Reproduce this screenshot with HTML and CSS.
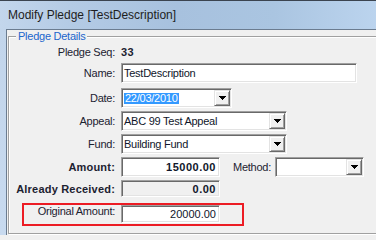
FILE: index.html
```html
<!DOCTYPE html>
<html>
<head>
<meta charset="utf-8">
<title>Modify Pledge</title>
<link rel="stylesheet" href="styles.css">
</head>
<body>
<div class="window">
  <div class="titlebar"><span class="title">Modify Pledge [TestDescription]</span></div>
  <div class="frame">
    <div class="client">
      <fieldset class="group">
        <legend>Pledge Details</legend>
        <div class="row r-seq">
          <span class="lbl">Pledge Seq:</span>
          <span class="seqval">33</span>
        </div>
        <div class="row r-name">
          <span class="lbl">Name:</span>
          <div class="tb w-name">TestDescription</div>
        </div>
        <div class="row r-date">
          <span class="lbl">Date:</span>
          <div class="cb w-date">
            <span class="cb-text"><span class="sel">22/03/2010</span></span>
            <span class="btn"><svg width="7" height="4" viewBox="0 0 7 4"><path d="M0 0h7v1H0zM1 1h5v1H1zM2 2h3v1H2zM3 3h1v1H3z" fill="#000"/></svg></span>
          </div>
        </div>
        <div class="row r-appeal">
          <span class="lbl">Appeal:</span>
          <div class="cb w-wide">
            <span class="cb-text">ABC 99 Test Appeal</span>
            <span class="btn"><svg width="7" height="4" viewBox="0 0 7 4"><path d="M0 0h7v1H0zM1 1h5v1H1zM2 2h3v1H2zM3 3h1v1H3z" fill="#000"/></svg></span>
          </div>
        </div>
        <div class="row r-fund">
          <span class="lbl">Fund:</span>
          <div class="cb w-wide">
            <span class="cb-text">Building Fund</span>
            <span class="btn"><svg width="7" height="4" viewBox="0 0 7 4"><path d="M0 0h7v1H0zM1 1h5v1H1zM2 2h3v1H2zM3 3h1v1H3z" fill="#000"/></svg></span>
          </div>
        </div>
        <div class="row r-amount">
          <span class="lbl bold">Amount:</span>
          <div class="tb w-num num bold">15000.00</div>
          <span class="method-lbl">Method:</span>
          <div class="cb w-method">
            <span class="cb-text"></span>
            <span class="btn"><svg width="7" height="4" viewBox="0 0 7 4"><path d="M0 0h7v1H0zM1 1h5v1H1zM2 2h3v1H2zM3 3h1v1H3z" fill="#000"/></svg></span>
          </div>
        </div>
        <div class="row r-received">
          <span class="lbl bold">Already Received:</span>
          <div class="tb w-num num bold readonly">0.00</div>
        </div>
        <div class="row r-original highlight">
          <span class="lbl">Original Amount:</span>
          <div class="tb w-num num">20000.00</div>
        </div>
      </fieldset>
    </div>
  </div>
</div>
</body>
</html>
```

FILE: styles.css
```css
html, body {
  margin: 0;
  padding: 0;
  overflow: hidden;
}
body {
  width: 376px;
  height: 235px;
  background: #f0f0f0;
  font-family: "Liberation Sans", Arial, sans-serif;
  color: #1c2230;
}
.window {
  width: 392px;
}
.titlebar {
  height: 28px;
  border-top: 1px solid #3b4450;
  background: linear-gradient(90deg, #c3d6ec 0%, #b4cbe5 18%, #a7c1de 45%, #aac5e1 70%, #bed6f0 100%);
  display: flex;
  align-items: center;
  padding-left: 8px;
}
.title {
  font-size: 12px;
  color: #1e1e1e;
}
.frame {
  display: flex;
  padding-left: 6px;
  background: linear-gradient(180deg, #c2d5eb, #c8daef);
}
.client {
  flex: 1;
  height: 205px;
  border-top: 1px solid #6b7c90;
  border-left: 1px solid #6b7c90;
  background: #f0f0f0;
  padding-left: 1px;
  font-size: 11px;
  letter-spacing: -0.25px;
}
.group {
  margin: 0;
  padding: 0;
  min-width: 0;
  box-sizing: border-box;
  height: 204px;
  border: 1px solid #a0a0a0;
  box-shadow: inset 1px 1px 0 #fff, 1px 1px 0 #fff;
}
.group legend {
  margin-left: 7px;
  padding: 1px 2px 0;
  font-size: 11px;
  line-height: 11px;
  color: #2266cc;
  background: #f0f0f0;
}
.row {
  display: flex;
  align-items: center;
}
.lbl {
  width: 106px;
  flex: 0 0 auto;
  text-align: right;
  white-space: nowrap;
  margin-right: 6px;
}
.bold {
  font-weight: bold;
}
.lbl.bold {
  letter-spacing: 0.2px;
}
.num.bold {
  letter-spacing: 0.5px;
}
.num {
  letter-spacing: 0;
  justify-content: flex-end;
  padding-right: 3px;
}
.r-seq { height: 16px; margin-top: 2px; }
.r-name { height: 20px; margin-top: 3px; }
.r-date { height: 20px; margin-top: 5px; }
.r-appeal { height: 20px; margin-top: 3px; }
.r-fund { height: 20px; margin-top: 3px; }
.r-amount { height: 20px; margin-top: 3px; }
.r-received { height: 17px; margin-top: 3px; }
.r-original { margin-top: 6px; }

.seqval {
  font-weight: bold;
  letter-spacing: 0.3px;
}

.tb {
  box-sizing: border-box;
  height: 20px;
  display: flex;
  align-items: center;
  padding-left: 2px;
  background: #fff;
  border: 1px solid;
  border-color: #a0a0a0 #fff #fff #a0a0a0;
  box-shadow: inset 1px 1px 0 #696969, inset -1px -1px 0 #e3e3e3;
  color: #10162a;
  white-space: nowrap;
}
.w-name { width: 236px; }
.w-num { width: 99px; }
.readonly {
  height: 17px;
  background: #f0f0f0;
}

.cb {
  box-sizing: border-box;
  height: 20px;
  display: flex;
  padding: 1px;
  background: #fff;
  border: 1px solid;
  border-color: #a0a0a0 #fff #fff #a0a0a0;
  box-shadow: inset 1px 1px 0 #696969, inset -1px -1px 0 #e3e3e3;
  color: #10162a;
}
.cb-text {
  flex: 1;
  display: flex;
  align-items: center;
  padding-left: 1px;
  white-space: nowrap;
  overflow: hidden;
}
.sel {
  background: #3399ff;
  color: #fff;
  padding-left: 1px;
  padding-right: 1px;
  line-height: 11px;
}
.btn {
  box-sizing: border-box;
  width: 16px;
  flex: 0 0 auto;
  display: flex;
  align-items: center;
  justify-content: center;
  background: #f0f0f0;
  border: 1px solid;
  border-color: #e3e3e3 #696969 #696969 #e3e3e3;
  box-shadow: inset 1px 1px 0 #fff, inset -1px -1px 0 #a0a0a0;
}
.w-date { width: 111px; }
.w-wide { width: 166px; }
.w-method { width: 89px; }
.method-lbl {
  margin-left: 13px;
  margin-right: 4px;
}

.highlight {
  box-sizing: border-box;
  margin-left: 13px;
  width: 222px;
  height: 23px;
  border: 2px solid #ec1c24;
  align-items: flex-start;
}
.highlight .lbl {
  width: 91px;
}
.highlight .tb {
  height: 18px;
}
```
